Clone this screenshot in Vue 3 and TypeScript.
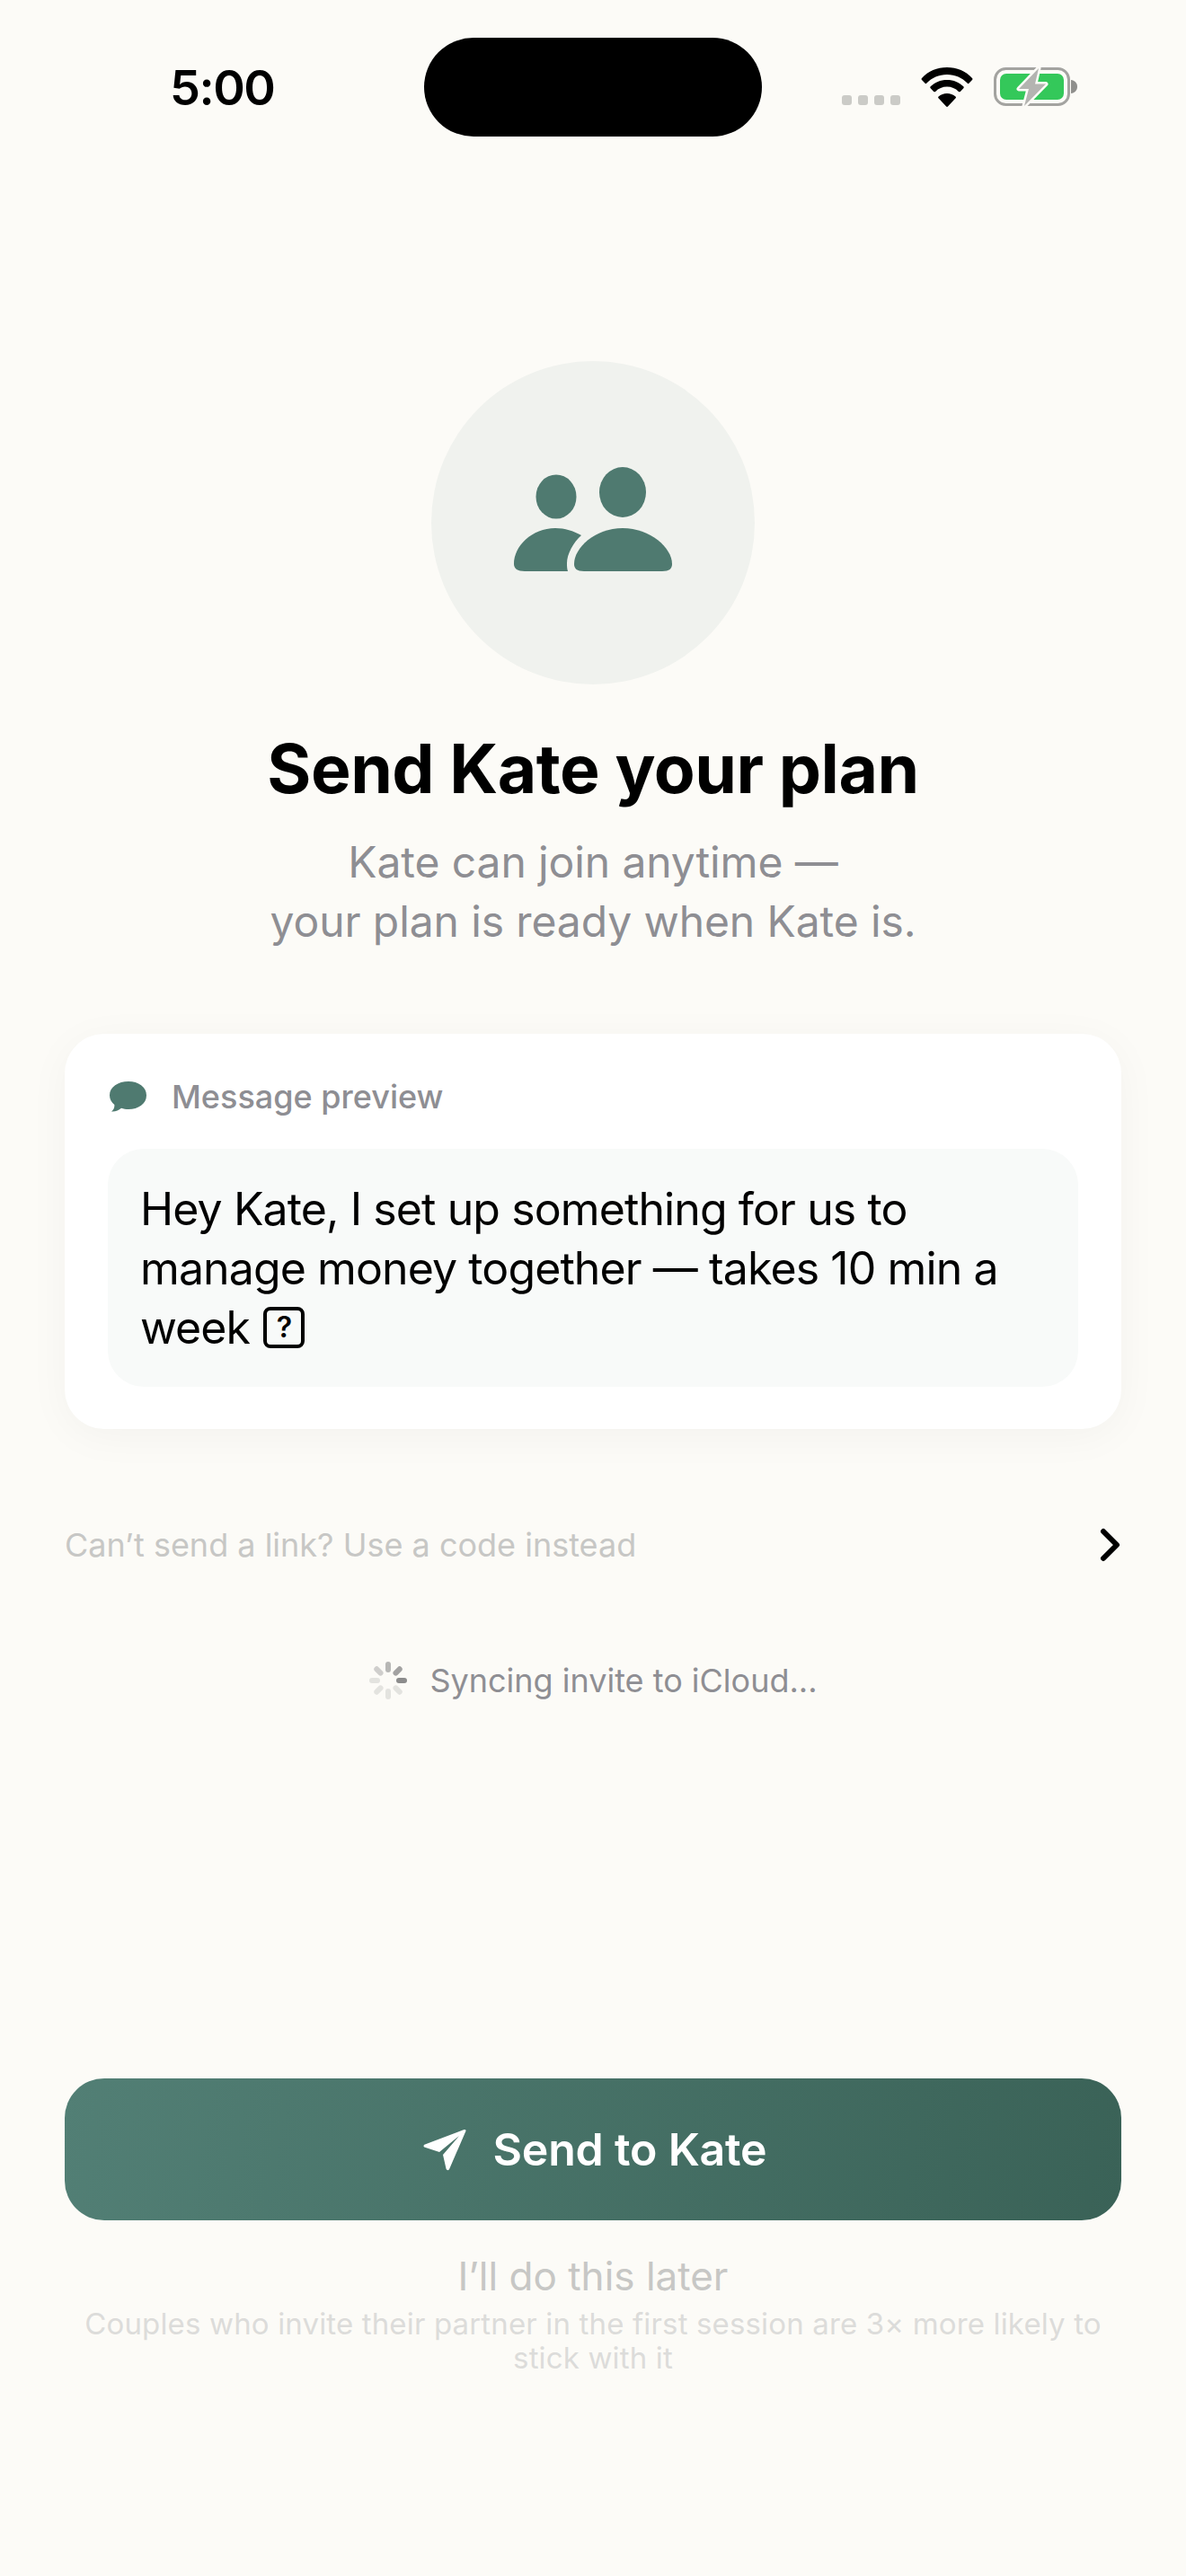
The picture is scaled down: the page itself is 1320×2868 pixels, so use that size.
<script setup lang="ts">
const spokes = [
  { a: 0, o: 0.62 }, { a: 45, o: 0.8 }, { a: 90, o: 1 }, { a: 135, o: 0.22 },
  { a: 180, o: 0.22 }, { a: 225, o: 0.22 }, { a: 270, o: 0.22 }, { a: 315, o: 0.4 },
]
</script>

<template>
  <main class="screen">
    <header class="status">
      <span class="time">5:00</span>
      <div class="island"></div>
      <div class="indicators">
        <div class="dots"><i></i><i></i><i></i><i></i></div>
        <svg class="wifi" width="58" height="44" viewBox="0 0 58 44">
          <path d="M29 0C18 0 8 4 1 12c-.6.7-.6 1.400 0 2l3.400 3.600c.7.7 1.400.7 2 0C12 11.600 20 8 29 8s17 3.600 22.600 9.600c.6.7 1.300.7 2 0L57 14c.6-.6.6-1.300 0-2C50 4 40 0 29 0Z" fill="#000"/>
          <path d="M29 14c-7.500 0-13.500 2.700-18.300 7.300-.6.6-.6 1.300 0 1.900l3.500 3.700c.6.6 1.300.6 1.900 0 3.400-3.300 8-5.300 12.900-5.300s9.500 2 12.900 5.300c.6.6 1.300.6 1.900 0l3.500-3.700c.6-.6.6-1.300 0-1.900C42.500 16.700 36.500 14 29 14Z" fill="#000"/>
          <path d="M29 29c-3.600 0-6.900 1.300-9.400 3.500-.6.5-.6 1.200-.1 1.800l8.400 9c.7.8 1.600.8 2.300 0l8.400-9c.5-.6.5-1.300-.1-1.800C35.900 30.300 32.600 29 29 29Z" fill="#000"/>
        </svg>
        <svg class="battery" width="93" height="44" viewBox="0 0 93 44">
          <rect x="1.500" y="1.500" width="82" height="40" rx="12" fill="none" stroke="#a3a3a0" stroke-width="3"/>
          <rect x="7" y="7" width="71" height="29" rx="7" fill="#34c85a"/>
          <path d="M86 14c4 .6 7 3.200 7 7.500s-3 6.900-7 7.500Z" fill="#8f8f8c"/>
          <path d="M50 1 28 24h11L34 43l24-24.500H46Z" fill="#b4b4b1" stroke="#fcfbf7" stroke-width="5" stroke-linejoin="round" paint-order="stroke"/>
        </svg>
      </div>
    </header>

    <section class="hero">
      <div class="avatar">
        <svg width="200" height="200" viewBox="0 0 200 200" fill="#4f7a70">
          <ellipse cx="59" cy="71" rx="22.500" ry="24.500"/>
          <ellipse cx="133" cy="66" rx="26" ry="28"/>
          <path d="M90 154h87c8 0 11-3 11-8 0-18-24-40-55-40s-54 22-54 40c0 5 3 8 11 8Z"/>
          <path d="M24 154h48c-1-3-1-6-1-9 0-10 7-23 16-31-9-5-18-8-29-8-26 0-46 20-46 40 0 5 4 8 12 8Z"/>
        </svg>
      </div>
      <h1>Send Kate your plan</h1>
      <p class="sub">Kate can join anytime —<br />your plan is ready when Kate is.</p>
    </section>

    <section class="card">
      <div class="card-head">
        <svg width="41" height="34" viewBox="0 0 41 34" fill="#4f7a70">
          <path d="M21 0C32 0 41 6 41 15.500S32 31 21 31c-3 0-5.500-.4-8-1.200C10 32.500 6 34 2 33.500c2.500-2 3.600-4.500 3.400-7.500C2 23 0 19.500 0 15.500 0 6 9.500 0 21 0Z"/>
        </svg>
        <span>Message preview</span>
      </div>
      <div class="bubble">Hey Kate, I set up something for us to manage money together — takes 10 min a week <span class="tofu">?</span></div>
    </section>

    <div class="code-row">
      <span>Can’t send a link? Use a code instead</span>
      <svg class="chev" width="24" height="40" viewBox="0 0 24 40" fill="none" stroke="#000" stroke-width="6" stroke-linecap="round" stroke-linejoin="round">
        <path d="M4 5l15 15L4 35"/>
      </svg>
    </div>

    <div class="sync">
      <svg width="44" height="44" viewBox="0 0 44 44">
        <rect v-for="s in spokes" :key="s.a" x="19" y="1" width="6" height="12" rx="3" fill="#8c8c8c" :opacity="s.o" :transform="`rotate(${s.a} 22 22)`"/>
      </svg>
      <span>Syncing invite to iCloud...</span>
    </div>

    <div class="spacer"></div>

    <button class="send">
      <svg width="48" height="50" viewBox="0 0 48 50" fill="#fff">
        <path d="M45.500 3 2 19.500c-2 .9-2 2.500 0 3.300L18 28l22-18-18 21 3.500 15.500c.8 2.200 3 2.200 3.800 0L47.500 4.500c.4-1-.9-1.900-2-1.500Z"/>
      </svg>
      <span>Send to Kate</span>
    </button>
    <div class="later">I’ll do this later</div>
    <p class="note">Couples who invite their partner in the first session are 3× more likely to stick with it</p>
  </main>
</template>

<style scoped>
.screen {
  width: 1320px;
  height: 2868px;
  box-sizing: border-box;
  background: #fcfbf7;
  display: flex;
  flex-direction: column;
  padding: 42px 72px 0;
  font-family: Inter, "Noto Sans", sans-serif;
  overflow: hidden;
}
.status {
  height: 110px;
  margin: 0 -72px;
  padding: 0 0 0 189px;
  display: flex;
  align-items: center;
}
.time { font-size: 54px; font-weight: 600; color: #000; width: 283px; letter-spacing: -1.500px; }
.island { width: 376px; height: 110px; border-radius: 55px; background: #000; }
.indicators { margin-left: 89px; display: flex; align-items: flex-start; height: 44px; }
.dots { display: flex; gap: 7px; margin-top: 31px; width: 88px; }
.dots i { width: 11px; height: 11px; border-radius: 3px; background: #cbcbc7; display: block; }
.wifi { margin-right: 23px; }
.hero { display: flex; flex-direction: column; align-items: center; margin-top: 250px; }
.avatar {
  width: 360px; height: 360px; border-radius: 50%;
  background: #f0f2ee;
  display: flex; align-items: center; justify-content: center;
}
h1 { margin: 50px 0 0; font-size: 75px; line-height: 88px; font-weight: 700; color: #000; letter-spacing: -0.500px; }
.sub { margin: 27px 0 0; font-size: 48px; line-height: 66px; color: #8e8e93; text-align: center; letter-spacing: -0.100px; }
.card {
  margin-top: 92px;
  height: 440px;
  box-sizing: border-box;
  background: #fff;
  border-radius: 44px;
  padding: 48px;
  box-shadow: 0 8px 48px rgba(0, 0, 0, 0.04);
}
.card-head { display: flex; align-items: center; gap: 28px; height: 40px; padding-left: 2px; margin-top: 2px; font-size: 36px; font-weight: 500; color: #8e8e93; }
.bubble {
  margin-top: 38px;
  background: #f8faf9;
  border-radius: 40px;
  padding: 34px 36px 0;
  height: 265px;
  box-sizing: border-box;
  font-size: 50px;
  line-height: 66px;
  letter-spacing: -0.900px;
  color: #000;
}
.tofu {
  display: inline-block;
  width: 46px; height: 46px;
  box-sizing: border-box;
  margin-left: 2px;
  border: 4px solid #000;
  border-radius: 8px;
  font-size: 32px;
  line-height: 38px;
  font-weight: 600;
  letter-spacing: 0;
  text-align: center;
  vertical-align: 7px;
}
.code-row {
  margin-top: 106px;
  height: 46px;
  display: flex; align-items: center; justify-content: space-between;
  font-size: 36px; line-height: 44px; color: #c7c7c5;
}
.sync {
  margin-top: 106px;
  display: flex; align-items: center; justify-content: center; gap: 24px;
  font-size: 36px; line-height: 44px; color: #8e8e93;
}
.spacer { flex: 1; }
.send {
  height: 158px;
  border: 0;
  border-radius: 44px;
  background: linear-gradient(100deg, #527f75, #3a6257);
  display: flex; align-items: center; justify-content: center; gap: 30px;
  color: #fff; font-family: inherit; font-size: 50px; font-weight: 600; letter-spacing: -0.200px;
  padding: 0 0 0 4px;
}
.later { margin-top: 34px; text-align: center; font-size: 44px; line-height: 56px; color: #c7c7c5; }
.note { margin: 6px 0 224px; text-align: center; font-size: 33px; line-height: 38px; letter-spacing: 0.150px; color: #dcdcda; }
</style>
